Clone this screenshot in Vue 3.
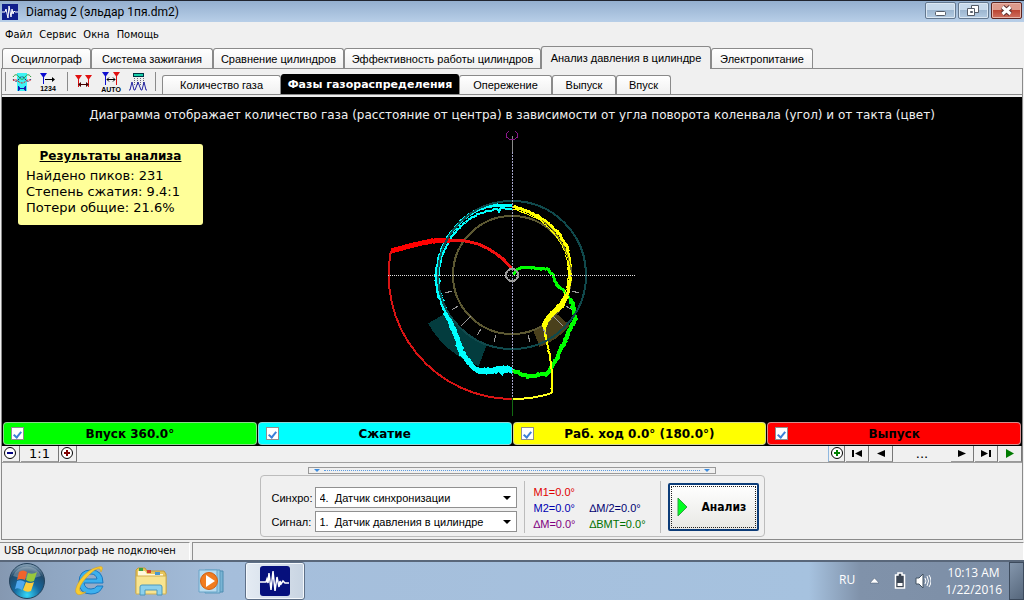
<script setup>
import { ref } from 'vue'

const menus = ['Файл', 'Сервис', 'Окна', 'Помощь']
const mainTabs = [
  'Осциллограф',
  'Система зажигания',
  'Сравнение цилиндров',
  'Эффективность работы цилиндров',
  'Анализ давления в цилиндре',
  'Электропитание',
]
const subTabs = ['Количество газа', 'Фазы газораспределения', 'Опережение', 'Выпуск', 'Впуск']
const mainTab = ref(4)
const subTab = ref(1)
const results = ['Найдено пиков: 231', 'Степень сжатия: 9.4:1', 'Потери общие: 21.6%']
const phases = ref([
  { label: 'Впуск 360.0°', cls: 'intake', on: true },
  { label: 'Сжатие', cls: 'compression', on: true },
  { label: 'Раб. ход 0.0° (180.0°)', cls: 'power', on: true },
  { label: 'Выпуск', cls: 'exhaust', on: true },
])

const CX = 512
const CY = 275

// Subdivides a trace and adds a small repeatable jitter, like a sampled signal.
function trace(points, amp, seed) {
  let s = seed
  const rnd = () => {
    s = (s * 1103515245 + 12345) % 2147483648
    return s / 2147483648 - 0.5
  }
  const out = []
  for (let i = 0; i < points.length - 1; i++) {
    const [x1, y1] = points[i]
    const [x2, y2] = points[i + 1]
    const n = Math.max(1, Math.round(Math.hypot(x2 - x1, y2 - y1) / 2))
    for (let k = 0; k < n; k++) {
      const t = k / n
      out.push([x1 + (x2 - x1) * t + rnd() * amp, y1 + (y2 - y1) * t + rnd() * amp])
    }
  }
  out.push(points[points.length - 1])
  return out.map((p) => p.map((v) => v.toFixed(1)).join(',')).join(' ')
}

const cyanUpper = [[445, 312], [438, 293], [436, 277], [438, 262], [442, 249], [448, 236], [461, 221], [470, 214], [480, 209], [490, 206], [500, 205], [512, 206]]
const cyanInner = [[447, 312], [439, 290], [439, 270], [442, 256], [450, 239], [462, 225], [474, 216], [486, 211], [498, 209], [499, 213], [500, 208], [512, 209]]
const cyanLower = [[512, 369], [500, 370], [487, 370], [475, 371], [467, 359], [461, 351], [458, 341], [453, 328], [449, 320], [445, 312]]
const greenStart = [[513, 275], [517, 270], [523, 267], [530, 268], [547, 269], [553, 275], [557, 285], [565, 292], [570, 298]]
const greenLower = [[570, 298], [574, 308], [575, 320], [570, 330], [565, 341], [558, 356], [552, 366], [547, 374], [538, 375], [528, 377], [518, 373], [513, 370]]
const yellowOuter = [[513, 206], [527, 211], [540, 217], [551, 226], [561, 236], [567, 247], [570, 260], [570, 280], [567, 295], [562, 305], [553, 313], [547, 320], [544, 327]]
const yellowInner = [[513, 209], [527, 214], [540, 220], [550, 229], [559, 240], [565, 251], [568, 264], [568, 280], [565, 294], [560, 303], [551, 312], [546, 322], [545, 337]]
const yellowDrop = [[544, 327], [546, 337], [550, 357], [552, 377], [552, 393]]
const redTop = [[512, 269], [503, 259], [495, 253], [487, 248], [478, 244], [470, 242], [460, 240], [450, 240], [432, 241], [413, 245], [391, 251]]
const redThick = redTop.slice(7)

const traces = [
  { p: trace(cyanInner, 1.4, 7), c: '#00ffff', w: 2 },
  { p: trace(cyanUpper, 1, 11), c: '#00ffff', w: 3 },
  { p: trace(cyanLower.slice(0, 4), 3, 3), c: '#00ffff', w: 6 },
  { p: trace(cyanLower.slice(3), 2, 5), c: '#00ffff', w: 5 },
  { p: trace(greenStart, 1.4, 9), c: '#00ff00', w: 3 },
  { p: trace(greenLower, 2, 13), c: '#00ff00', w: 4 },
  { p: trace(yellowInner, 1, 19), c: '#ffff00', w: 1 },
  { p: trace(yellowOuter, 1.4, 21), c: '#ffff00', w: 3 },
  { p: trace(yellowOuter.slice(8), 1, 27), c: '#ffff00', w: 5 },
  { p: trace(yellowDrop, 1, 23), c: '#ffff00', w: 2 },
  { p: trace(redTop, 0, 1), c: '#f01010', w: 3 },
  { p: trace(redThick, 0.6, 25), c: '#ff0000', w: 5 },
]

function polar(r, deg) {
  const a = (deg * Math.PI) / 180
  return [CX + r * Math.cos(a), CY + r * Math.sin(a)]
}
const ticks = [15, 30, 45, 60, 75, 105, 120, 135, 150, 165].map((d) => {
  const long = d === 45 || d === 135
  const [x1, y1] = polar(long ? 58 : 62, d)
  const [x2, y2] = polar(long ? 72 : 69, d)
  return { x1, y1, x2, y2 }
})
function sector(r1, r2, a1, a2) {
  const [ax, ay] = polar(r2, a1)
  const [bx, by] = polar(r2, a2)
  const [cx, cy] = polar(r1, a2)
  const [dx, dy] = polar(r1, a1)
  return `M${ax} ${ay}A${r2} ${r2} 0 0 1 ${bx} ${by}L${cx} ${cy}A${r1} ${r1} 0 0 0 ${dx} ${dy}Z`
}
const tealSector = sector(74, 97, 110, 150)
const oliveSector = sector(59, 77, 41, 69)
</script>

<template>
  <div class="screen">
    <header class="titlebar">
      <svg class="appicon" viewBox="0 0 16 16" aria-hidden="true">
        <rect width="16" height="16" fill="#101f8c" />
        <path d="M0 8h3l1-3 2 9 1-12 2 11 1-8 1 5 1-3 1 1h3" fill="none" stroke="#fff" />
      </svg>
      <h1>Diamag 2 (эльдар 1пя.dm2)</h1>
      <div class="winbtns">
        <button type="button" aria-label="Свернуть">
          <svg viewBox="0 0 29 15"><rect x="9.500" y="8.500" width="10" height="4" rx="1" fill="#fff" stroke="#555c68" /></svg>
        </button>
        <button type="button" aria-label="Восстановить">
          <svg viewBox="0 0 29 15">
            <path d="M12.500 2.500h7v7h-7z" fill="#fff" stroke="#555c68" />
            <path d="M8.500 5.500h7v7h-7z" fill="#fff" stroke="#555c68" />
            <path d="M11.500 8.500h2v1h-2z" fill="#8fb0d0" stroke="#555c68" />
          </svg>
        </button>
        <button type="button" class="close" aria-label="Закрыть">
          <svg viewBox="0 0 29 15">
            <path d="M10.500 4l8 7M18.500 4l-8 7" stroke="#5b3030" stroke-width="5" />
            <path d="M10.500 4l8 7M18.500 4l-8 7" stroke="#fff" stroke-width="3" />
          </svg>
        </button>
      </div>
    </header>

    <nav class="menu">
      <button v-for="m in menus" :key="m" type="button">{{ m }}</button>
    </nav>

    <div class="maintabs">
      <button
        v-for="(t, i) in mainTabs"
        :key="t"
        type="button"
        :class="{ active: i === mainTab }"
        @click="mainTab = i"
      >{{ t }}</button>
    </div>

    <main class="page">
      <div class="toolbar">
        <div class="tools">
          <button type="button" aria-label="Период сигнала">
            <svg viewBox="0 0 22 20">
              <rect x="6" y="1" width="10" height="18" fill="#3df3f3" />
              <path d="M2 5c2-3 4-3 6 0s4 3 6 0 4-3 6 0" fill="none" stroke="#2c9a3c" />
              <path d="M2 7c2 3 4 3 6 0s4-3 6 0 4 3 6 0" fill="none" stroke="#226" stroke-dasharray="2 1" />
              <path d="M2 9c3-4 5 2 9 2s6-6 9-2" fill="none" stroke="#d22" stroke-dasharray="2 1" />
              <path d="M7 16.500h8M7.500 14v5M14.500 14v5M9 15l-2 1.500 2 1.500M13 15l2 1.500-2 1.500" fill="none" stroke="#1414b0" />
            </svg>
          </button>
          <button type="button" aria-label="Номера цилиндров">
            <svg viewBox="0 0 22 20">
              <path d="M2 1h7L5.500 6z" fill="#0b0bd0" />
              <path d="M5.500 4v8" stroke="#0b0bd0" />
              <path d="M7 7.500h8" stroke="#000" /><path d="M14 5l3 2.500-3 2.500z" />
              <text x="10" y="19" text-anchor="middle" class="icontext">1234</text>
            </svg>
          </button>
        </div>
        <div class="tools three">
          <button type="button" aria-label="Маркеры">
            <svg viewBox="0 0 22 20">
              <path d="M1 3h7L4.500 8zM11 3h7l-3.500 5z" fill="#e01010" />
              <path d="M4.500 6v9M14.500 6v9" stroke="#e01010" />
              <path d="M5 12.500h9" stroke="#400" /><path d="M7 10l-3 2.500L7 15zM12 10l3 2.500-3 2.500z" fill="#400" />
            </svg>
          </button>
          <button type="button" aria-label="Автоматические маркеры">
            <svg viewBox="0 0 22 20">
              <path d="M1 0h7L4.500 5z" fill="#1010d0" /><path d="M12 0h7l-3.500 5z" fill="#e01010" />
              <path d="M4.500 3v10" stroke="#1010d0" /><path d="M15.500 3v10" stroke="#e01010" />
              <path d="M6 7.500h8M8 5.500l-2 2 2 2M12 5.500l2 2-2 2" fill="none" stroke="#000" />
              <text x="10" y="20" text-anchor="middle" class="icontext">AUTO</text>
            </svg>
          </button>
          <button type="button" aria-label="Фильтр сигнала">
            <svg viewBox="0 0 22 20">
              <rect x="5.500" y="1.500" width="10" height="3" fill="#17d0a8" stroke="#034" />
              <path d="M6.500 6v7M9.500 6v7M12.500 6v7M15.500 6v7" stroke="#667" stroke-dasharray="1 1" />
              <path d="M1 18h1l2-8 2 8h1l3-8 3 8h1l2-8 2 8h1" fill="none" stroke="#2424a0" />
            </svg>
          </button>
        </div>
        <div class="subtabs">
          <button
            v-for="(t, i) in subTabs"
            :key="t"
            type="button"
            :class="{ active: i === subTab }"
            @click="subTab = i"
          >{{ t }}</button>
        </div>
      </div>

      <section class="canvas">
        <p class="caption">Диаграмма отображает количество газа (расстояние от центра) в зависимости от угла поворота коленвала (угол) и от такта (цвет)</p>
        <aside class="results">
          <h2>Результаты анализа</h2>
          <p v-for="r in results" :key="r">{{ r }}</p>
        </aside>
        <svg class="diagram" viewBox="380 128 264 290" shape-rendering="crispEdges" fill="none" role="img" aria-label="Фазы газораспределения">
          <path :d="tealSector" fill="#033c3e" />
          <path :d="oliveSector" fill="#4a401c" />
          <circle :cx="CX" :cy="CY" r="59" stroke="#5c5832" stroke-width="2" />
          <polyline v-for="(t, i) in traces" :key="i" :points="t.p" :stroke="t.c" :stroke-width="t.w" />
          <circle :cx="CX" :cy="CY" r="74" stroke="#10494c" stroke-width="2" />
          <path d="M391 251A124 124 0 0 0 512 399" stroke="#d81414" stroke-width="2" />
          <path d="M512 399Q534 399 552 393" stroke="#ffff20" stroke-width="2" />
          <path d="M542 220Q566 238 571 270" stroke="#807818" />
          <line v-for="(t, i) in ticks" :key="'t' + i" v-bind="t" stroke="#9a9a9a" />
          <path d="M388 275.500H635" stroke="#e0e0e0" stroke-dasharray="1 1" />
          <path d="M512.500 136V152" stroke="#8a8a8a" />
          <path d="M512.500 152V398" stroke="#a4a4c8" stroke-dasharray="2 1" />
          <path d="M512.500 398V416" stroke="#126a12" />
          <path d="M508.500 131L506.500 134V137L509.500 139.500H514.500L517.500 137V134L515.500 131" stroke="#8a188a" />
          <circle :cx="CX" :cy="CY" r="6" stroke="#9c9c9c" stroke-width="2" />
        </svg>
      </section>

      <div class="phases">
        <label v-for="p in phases" :key="p.label" :class="p.cls">
          <input v-model="p.on" type="checkbox" />
          <span>{{ p.label }}</span>
        </label>
      </div>

      <div class="scale">
        <div class="zoomer">
          <button type="button" aria-label="Уменьшить">
            <svg viewBox="0 0 16 15"><circle cx="7" cy="7" r="5.500" fill="#fff" stroke="#000" /><path d="M4 7h6" stroke="#000080" stroke-width="2" /></svg>
          </button>
          <button type="button" class="ratio">1:1</button>
          <button type="button" aria-label="Увеличить">
            <svg viewBox="0 0 16 15"><circle cx="7" cy="7" r="5.500" fill="#fff" stroke="#000" /><path d="M4 7h6M7 4v6" stroke="#800000" stroke-width="2" /></svg>
          </button>
        </div>
        <div class="player">
          <button type="button" aria-label="Добавить">
            <svg viewBox="0 0 16 15"><circle cx="8" cy="7" r="5.500" fill="#fff" stroke="#000" /><path d="M5 7h6M8 4v6" stroke="#008000" stroke-width="2" /></svg>
          </button>
          <button type="button" aria-label="В начало"><svg viewBox="0 0 16 15"><path d="M4 4v7" stroke="#000" stroke-width="2" /><path d="M13 4v7L6 7.500z" /></svg></button>
          <button type="button" aria-label="Назад"><svg viewBox="0 0 16 15"><path d="M12 4v7L4 7.500z" /></svg></button>
          <span class="dots">...</span>
          <button type="button" aria-label="Вперёд"><svg viewBox="0 0 16 15"><path d="M4 4v7l8-3.500z" /></svg></button>
          <button type="button" aria-label="В конец"><svg viewBox="0 0 16 15"><path d="M3 4v7l7-3.500z" /><path d="M12 4v7" stroke="#000" stroke-width="2" /></svg></button>
          <button type="button" aria-label="Пуск"><svg viewBox="0 0 16 15"><path d="M4 3v9l8-4.500z" fill="#007a00" /></svg></button>
        </div>
      </div>

      <div class="bottom">
        <div class="panel">
          <button type="button" class="splitter" aria-label="Свернуть панель"><i></i><b></b><i></i></button>
          <div class="controls">
            <div class="fields">
              <label for="sync">Синхро:</label>
              <div class="combo">
                <select id="sync"><option>4.&nbsp; Датчик синхронизации</option></select>
                <svg viewBox="0 0 8 4"><path d="M0 0h8L4 4z" /></svg>
              </div>
              <label for="signal">Сигнал:</label>
              <div class="combo">
                <select id="signal"><option>1.&nbsp; Датчик давления в цилиндре</option></select>
                <svg viewBox="0 0 8 4"><path d="M0 0h8L4 4z" /></svg>
              </div>
            </div>
            <div class="marks">
              <span class="m1">M1=0.0°</span><span></span>
              <span class="m2">M2=0.0°</span><span class="half">∆M/2=0.0°</span>
              <span class="dm">∆M=0.0°</span><span class="bmt">∆BMT=0.0°</span>
            </div>
            <button type="button" class="analyze">
              <svg viewBox="0 0 11 20"><path d="M1 1v18l9-9z" fill="#00ff20" stroke="#30a040" /></svg>
              <span>Анализ</span>
            </button>
          </div>
        </div>
      </div>
    </main>

    <footer class="status">
      <span>USB Осциллограф не подключен</span>
      <span></span>
    </footer>

    <div class="taskbar">
      <button type="button" class="orb" aria-label="Пуск">
        <svg viewBox="0 0 38 38">
          <defs>
            <radialGradient id="orb" cx=".5" cy=".9" r=".85">
              <stop offset="0" stop-color="#35d8f8" /><stop offset=".45" stop-color="#15669c" /><stop offset=".8" stop-color="#214a6a" /><stop offset="1" stop-color="#7c98ae" />
            </radialGradient>
          </defs>
          <circle cx="19" cy="19" r="17.500" fill="url(#orb)" stroke="#24425c" />
          <path d="M5 14a15 15 0 0 1 28 0q-14 5-28 0z" fill="#fff" opacity=".25" />
          <path d="M11 10q4-3 8 0l-2 8q-4-2-8 0z" fill="#f0642c" />
          <path d="M20 11q5 2 9-1l-3 9q-4 2-8-1z" fill="#98c83c" />
          <path d="M9 19q4-2 8 1l-3 8q-4-3-7-1z" fill="#50a8f0" />
          <path d="M18 20q4 2 8 0l-3 9q-4 2-8-1z" fill="#fccc3c" />
        </svg>
      </button>
      <button type="button" class="task" aria-label="Internet Explorer">
        <svg viewBox="0 0 34 34">
          <path d="M30 19H11q1 6 7 6 4 0 6-3h6q-3 8-12 8-12 0-12-12Q6 6 18 6q12 0 12 13zM11 15h13q-1-5-6-5-6 0-7 5z" fill="#3cb0ee" stroke="#1a78c0" />
          <path d="M28 8q4-7-3-5Q15 5 7 16 0 27 4 30q3 2 9-2-5 1-6-1-2-4 6-13Q23 3 27 5z" fill="#f8cc30" stroke="#d49a18" stroke-width=".5" />
        </svg>
      </button>
      <button type="button" class="task" aria-label="Проводник">
        <svg viewBox="0 0 34 34">
          <path d="M2 6l2-2h7l2 3h17l2 3v19H2z" fill="#e8c65c" stroke="#c09a38" />
          <path d="M4 7h7l2 3h16v4H4z" fill="#fff8dc" />
          <path d="M5 4h4v3H5z" fill="#3aa040" /><path d="M13 6h4v3h-4z" fill="#d04030" /><path d="M21 8h5v3h-5z" fill="#4898d0" />
          <path d="M2 12h30v18H2z" fill="#f8e490" stroke="#d0b050" />
          <path d="M6 31V23q0-2 2-2h18q2 0 2 2v8h-5v-5H11v5z" fill="#8cd0ec" stroke="#4c98bc" />
        </svg>
      </button>
      <button type="button" class="task" aria-label="Проигрыватель">
        <svg viewBox="0 0 34 34">
          <path d="M14 7h14v21H14z" fill="#78b4d4" stroke="#4c8cb0" /><path d="M10 6h15v23H10z" fill="#98cbe4" stroke="#5a98bc" /><path d="M4 6h18v22H4z" fill="#b8dcf0" stroke="#68a4c8" />
          <circle cx="14" cy="17" r="8.500" fill="#f07c20" stroke="#d46010" /><path d="M11 11v12l9-6z" fill="#fff" />
        </svg>
      </button>
      <button type="button" class="task current" aria-label="Diamag 2">
        <svg viewBox="0 0 30 30">
          <rect width="30" height="30" rx="3" fill="#06107c" />
          <path d="M0 16h6l1-3 1 4 1-10 2 17 2-19 2 20 2-14 2 10 1-6 1 3 2-3 2 2h4" fill="none" stroke="#fff" stroke-width="1.500" />
        </svg>
      </button>
      <div class="tray">
        <button type="button" class="lang">RU</button>
        <button type="button" aria-label="Скрытые значки"><svg class="up" viewBox="0 0 9 6"><path d="M0 5h9L4.500 0z" fill="#fff" stroke="#4a5a70" stroke-width=".5" /></svg></button>
        <button type="button" aria-label="Батарея">
          <svg class="bat" viewBox="0 0 12 18"><path d="M4 1h4v2h2.500v13h-9V3H4z" fill="#3c4654" stroke="#fff" stroke-width="1.500" /><path d="M3.500 11h5v3h-5z" fill="#fff" /></svg>
        </button>
        <button type="button" aria-label="Громкость">
          <svg class="vol" viewBox="0 0 16 16"><path d="M1 5h3l4-4v14l-4-4H1z" fill="#fff" stroke="#405060" /><path d="M10 5q2 3 0 6M12 3q3 5 0 10M14 2q4 6 0 12" fill="none" stroke="#fff" /></svg>
        </button>
        <time class="clock"><span>10:13 AM</span><span>1/22/2016</span></time>
        <button type="button" class="peek" aria-label="Показать рабочий стол"></button>
      </div>
    </div>
  </div>
</template>

<style>
body {
  background: #f0f0f0;
}
</style>

<style scoped>
.screen {
  --line: #8a8a8a;
  --tahoma: "DejaVu Sans Condensed", "DejaVu Sans", sans-serif;
  min-height: 100vh;
  display: flex;
  flex-direction: column;
  background: #f0f0f0;
  color: #000;
  font: 11px/14px "Liberation Sans", sans-serif;
}
.screen *, .screen {
  box-sizing: border-box;
}
h1, h2, p {
  margin: 0;
  font-weight: normal;
}
button {
  margin: 0;
  padding: 0;
  border: 0;
  background: none;
  color: inherit;
  font: inherit;
}
svg {
  display: block;
}

.titlebar {
  height: 22px;
  display: flex;
  align-items: center;
  border-top: 1px solid #20242e;
  background: linear-gradient(#94afcf, #b8cfe8);
}
.appicon {
  width: 16px;
  height: 16px;
  margin: 0 8px 0 2px;
}
.titlebar h1 {
  flex: 1;
  font: 12px/20px Roboto, "Noto Sans", sans-serif;
}
.winbtns {
  display: flex;
  gap: 2px;
  align-self: flex-start;
  padding: 1px 2px 0 0;
}
.winbtns button {
  width: 31px;
  height: 17px;
  border: 1px solid #64788f;
  border-radius: 2px;
  background: linear-gradient(#c6d8ea 45%, #9db6d0 50%, #b4cbe2);
  box-shadow: inset 0 0 0 1px #dbe7f3;
}
.winbtns button.close {
  border-color: #5e2420;
  background: linear-gradient(#dd9a8c 45%, #bc4634 50%, #cf7060);
  box-shadow: inset 0 0 0 1px #e8b4a8;
}
.winbtns svg {
  width: 29px;
  height: 15px;
}

.menu {
  height: 24px;
  display: flex;
  align-items: center;
  gap: 7px;
  padding: 2px 5px 0;
  font: 11px/14px var(--tahoma);
}

.maintabs {
  display: grid;
  grid-template-columns: 89px 122px 131px 197px 170px 102px;
  align-items: end;
  height: 22px;
  padding-left: 2px;
}
.maintabs button, .subtabs button {
  border: 1px solid var(--line);
  border-bottom: 0;
  border-radius: 3px 3px 0 0;
  background: linear-gradient(#fff, #f0f0f0);
  white-space: nowrap;
}
.maintabs button {
  height: 20px;
}
.maintabs button.active {
  position: relative;
  height: 23px;
  margin-bottom: -1px;
  background: #f0f0f0;
}

.page {
  flex: 1;
  display: flex;
  flex-direction: column;
  margin: 0 1px;
  border: 1px solid var(--line);
}
.toolbar {
  display: flex;
  height: 26px;
  border-bottom: 1px solid var(--line);
}
.tools {
  display: flex;
  gap: 5px;
  margin: 3px 0;
  padding-left: 5px;
  width: 62px;
  border-left: 1px solid var(--line);
  margin-left: 3px;
}
.tools.three {
  width: 89px;
  margin-left: 0;
  padding-left: 6px;
  border-right: 1px solid var(--line);
}
.tools svg {
  width: 22px;
  height: 20px;
}
.icontext {
  font: bold 7px "Liberation Sans", sans-serif;
}
.subtabs {
  display: grid;
  grid-template-columns: 119px 178px 93px 64px 55px;
  align-items: end;
  margin-left: 6px;
}
.subtabs button {
  height: 19px;
}
.subtabs button.active {
  height: 20px;
  border-color: #000;
  background: #000;
  color: #fff;
  font: bold 11px/14px "DejaVu Sans", sans-serif;
}

.canvas {
  position: relative;
  flex: 1;
  margin-top: 2px;
  padding: 10px 0 3px;
  background: #000;
}
.caption {
  color: #f0f0f0;
  font: 12px/16px "DejaVu Sans", sans-serif;
  text-align: center;
}
.results {
  position: absolute;
  left: 16px;
  top: 47px;
  width: 185px;
  padding: 4px 8px 9px;
  border-radius: 3px;
  background: #ffff99;
  font: 13px/16px "DejaVu Sans", sans-serif;
}
.results h2 {
  margin-bottom: 4px;
  font: bold 12px/16px "DejaVu Sans", sans-serif;
  text-align: center;
  text-decoration: underline;
}
.diagram {
  width: 264px;
  height: 290px;
  margin: 5px auto 0;
}

.phases {
  display: grid;
  grid-template-columns: repeat(4, 1fr);
  gap: 1px;
  padding: 0 1px 1px;
  background: #000;
}
.phases label {
  display: flex;
  align-items: center;
  height: 23px;
  padding: 0 7px;
  border: 1px solid rgba(200, 200, 200, 0.7);
  border-radius: 4px;
  font: bold 12px/16px "DejaVu Sans", sans-serif;
}
.phases span {
  flex: 1;
  padding-right: 13px;
  text-align: center;
}
.intake { background: #00ff00; }
.compression { background: #00ffff; }
.power { background: #ffff00; }
.exhaust { background: #ff0000; }
.phases input {
  appearance: none;
  width: 13px;
  height: 13px;
  margin: 0;
  border: 1px solid #8f8f8f;
  background: #fff;
  display: grid;
  place-items: center;
}
.phases input:checked::before {
  content: "";
  width: 3px;
  height: 6px;
  border: solid #3c80d8;
  border-width: 0 2px 2px 0;
  transform: rotate(40deg);
}

.scale {
  display: flex;
  justify-content: space-between;
  height: 17px;
  padding-left: 1px;
  border-bottom: 1px solid #a0a0a0;
}
.zoomer, .player {
  display: flex;
  gap: 1px;
}
.scale button {
  height: 16px;
  display: grid;
  place-items: center;
  border-right: 1px solid #777;
  border-bottom: 1px solid #999;
}
.zoomer button {
  width: 17px;
}
.scale svg {
  width: 16px;
  height: 15px;
}
.zoomer .ratio {
  width: 38px;
  font: 13px/15px "DejaVu Sans", sans-serif;
}
.player button {
  width: 23px;
}
.player button:first-child {
  width: 17px;
  border-left: 1px solid #8fb8e0;
}
.dots {
  width: 56px;
  font: 13px/15px "DejaVu Sans", sans-serif;
  text-align: center;
}

.bottom {
  display: flex;
  justify-content: center;
  padding: 4px 0 2px;
}
.panel {
  display: flex;
  flex-direction: column;
  align-items: center;
  gap: 1px;
}
.splitter {
  display: flex;
  align-items: center;
  gap: 4px;
  width: 408px;
  height: 7px;
  padding: 0 5px;
  border: 1px solid #999;
}
.splitter i {
  border: 3px solid transparent;
  border-top-color: #3c8ce0;
  border-bottom: 0;
}
.splitter b {
  flex: 1;
  border-top: 1px dotted #5c9ce0;
}
.controls {
  display: flex;
  padding: 5px 5px 3px;
  border: 1px solid #bcbcbc;
  border-radius: 4px;
}
.fields {
  display: grid;
  grid-template-columns: 43px 202px;
  align-items: center;
  gap: 3px 0;
  padding: 6px 7px 1px 6px;
  border-right: 1px solid #bcbcbc;
}
.combo {
  position: relative;
}
.combo select {
  appearance: none;
  display: block;
  width: 100%;
  height: 21px;
  padding: 0 18px 0 4px;
  border: 1px solid #909090;
  border-radius: 0;
  background: #fff;
  color: #000;
  font: 11px/14px "Liberation Sans", sans-serif;
}
.combo svg {
  position: absolute;
  right: 6px;
  top: 9px;
  width: 8px;
  height: 4px;
}
.marks {
  display: grid;
  grid-template-columns: 56px 70px;
  align-content: center;
  padding: 2px 0 0 9px;
  border-right: 1px solid #bcbcbc;
  line-height: 16px;
}
.m1 { color: #e00000; }
.m2 { color: #0000b0; }
.half { color: #000070; }
.dm { color: #800080; }
.bmt { color: #007000; }
.analyze {
  display: flex;
  align-items: center;
  gap: 14px;
  width: 91px;
  margin: 2px 0 2px 7px;
  padding-left: 7px;
  border: 2px solid #0c3c78;
  border-radius: 2px;
  outline: 1px dotted #222;
  outline-offset: -4px;
  background: linear-gradient(#fff, #e8e8e4);
  font: bold 12px/16px var(--tahoma);
}
.analyze svg {
  width: 11px;
  height: 20px;
}

.status {
  display: grid;
  grid-template-columns: 190px 1fr;
  gap: 2px;
  height: 20px;
  padding-top: 2px;
  font: 11px/14px var(--tahoma);
}
.status span {
  padding: 1px 4px;
  border-top: 1px solid #909090;
  border-right: 1px solid #fff;
}
.status span + span {
  border-left: 1px solid #909090;
}

.taskbar {
  display: flex;
  height: 40px;
  border-top: 2px solid #59677a;
  background: linear-gradient(90deg, #8598b1, #8fa6c2 5%, #a5bedb 22%, #a6c2df 79%, #8092aa 84%, #7c8ea6);
}
.orb {
  width: 54px;
}
.orb svg {
  width: 38px;
  height: 38px;
  margin-left: 8px;
}
.task {
  width: 60px;
  margin-right: 1px;
  display: grid;
  place-items: center;
  margin-left: 6px;
}
.task + .task {
  margin-left: 0;
}
.task svg {
  width: 34px;
  height: 34px;
}
.task.current {
  margin-left: 2px;
  border: 1px solid #5e7088;
  border-radius: 3px;
  background: linear-gradient(90deg, #e4ebf3, #c8d4e2);
  box-shadow: inset 0 0 0 1px #f4f8fc;
}
.task.current svg {
  width: 30px;
  height: 30px;
}
.tray {
  display: flex;
  align-items: center;
  margin-left: auto;
  color: #fff;
  font: 12px/17px "Open Sans", "Noto Sans", sans-serif;
}
.lang {
  margin: 0 15px 4px 0;
}
.up {
  width: 9px;
  height: 6px;
}
.bat {
  width: 12px;
  height: 18px;
  margin: 0 9px 0 15px;
}
.vol {
  width: 16px;
  height: 16px;
  margin-right: 14px;
}
.clock {
  display: flex;
  flex-direction: column;
  align-items: center;
}
.peek {
  width: 15px;
  height: 38px;
  margin-left: 7px;
  border: 1px solid #3c4a5c;
  background: linear-gradient(135deg, #8496ac, #56677c);
}
</style>
